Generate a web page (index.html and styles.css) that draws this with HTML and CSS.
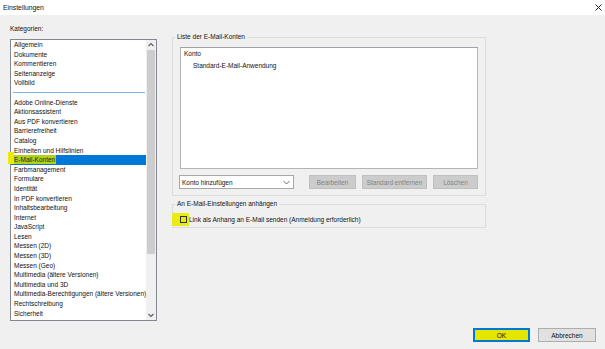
FILE: index.html
```html
<!DOCTYPE html>
<html>
<head>
    <title>Einstellungen</title>
    <link rel="stylesheet" href="styles.css">
</head>
<body>
<div class="window">
    <div class="titlebar">
        <span>Einstellungen</span>
        <svg class="close" width="7" height="7" viewBox="0 0 7 7"><path d="M0.5 0.5L6.5 6.5M6.5 0.5L0.5 6.5" stroke="#222" stroke-width="1"/></svg>
    </div>

    <div class="main">
        <div class="categories">
            <div class="caption">Kategorien:</div>
            <div class="listbox">
                <ul class="items">
                    <li>Allgemein</li>
                    <li>Dokumente</li>
                    <li>Kommentieren</li>
                    <li>Seitenanzeige</li>
                    <li>Vollbild</li>
                    <li class="sep"></li>
                    <li>Adobe Online-Dienste</li>
                    <li>Aktionsassistent</li>
                    <li>Aus PDF konvertieren</li>
                    <li>Barrierefreiheit</li>
                    <li>Catalog</li>
                    <li>Einheiten und Hilfslinien</li>
                    <li class="selected"><span class="hl">E-Mail-Konten</span></li>
                    <li>Farbmanagement</li>
                    <li>Formulare</li>
                    <li>Identität</li>
                    <li>In PDF konvertieren</li>
                    <li>Inhaltsbearbeitung</li>
                    <li>Internet</li>
                    <li>JavaScript</li>
                    <li>Lesen</li>
                    <li>Messen (2D)</li>
                    <li>Messen (3D)</li>
                    <li>Messen (Geo)</li>
                    <li>Multimedia (ältere Versionen)</li>
                    <li>Multimedia und 3D</li>
                    <li>Multimedia-Berechtigungen (ältere Versionen)</li>
                    <li>Rechtschreibung</li>
                    <li>Sicherheit</li>
                    <li>Sicherheit (erweitert)</li>
                </ul>
                <div class="scrollbar">
                    <svg class="arrow" width="10" height="10" viewBox="0 0 10 10"><path d="M2.5 6L5 3.5L7.5 6" fill="none" stroke="#606060" stroke-width="1.2"/></svg>
                    <div class="thumb"></div>
                    <div class="track"></div>
                    <svg class="arrow" width="10" height="10" viewBox="0 0 10 10"><path d="M2.5 4L5 6.5L7.5 4" fill="none" stroke="#606060" stroke-width="1.2"/></svg>
                </div>
            </div>
            <div class="marker"></div>
        </div>

        <div class="panel">
            <fieldset class="group accounts">
                <legend>Liste der E-Mail-Konten</legend>
                <div class="accountlist">
                    <div class="head">Konto</div>
                    <div class="entry">Standard-E-Mail-Anwendung</div>
                </div>
                <div class="actions">
                    <div class="combo">
                        <span>Konto hinzufügen</span>
                        <svg width="9" height="9" viewBox="0 0 9 9"><path d="M1.5 3L4.5 6L7.5 3" fill="none" stroke="#707070" stroke-width="1"/></svg>
                    </div>
                    <button class="btn first" disabled>Bearbeiten</button>
                    <button class="btn wide" disabled>Standard entfernen</button>
                    <button class="btn" disabled>Löschen</button>
                </div>
            </fieldset>

            <fieldset class="group attach">
                <legend>An E-Mail-Einstellungen anhängen</legend>
                <label class="check">
                    <span class="mark"><span class="box"></span></span>
                    <span>Link als Anhang an E-Mail senden (Anmeldung erforderlich)</span>
                </label>
            </fieldset>
        </div>
    </div>

    <div class="footer">
        <button class="dlg ok">OK</button>
        <button class="dlg">Abbrechen</button>
    </div>
</div>
</body>
</html>
```

FILE: styles.css
```css
body {
    margin: 0;
    padding: 0;
    background: #f0f0f0;
    font-family: "Liberation Sans", Arial, sans-serif;
    font-size: 6.5px;
    color: #111;
}

.window {
    width: 605px;
    height: 349px;
    overflow: hidden;
}

.titlebar {
    height: 15px;
    background: #fff;
    display: flex;
    align-items: center;
    justify-content: space-between;
    padding: 0 3px 0 3px;
    font-size: 6.8px;
}

.titlebar .close {
    margin-right: 0;
}

.main {
    display: flex;
    padding-top: 9px;
}

/* left column */
.categories {
    position: relative;
    margin-left: 10px;
    width: 147px;
}

.caption {
    height: 10px;
    line-height: 10px;
    margin-bottom: 5px;
}

.listbox {
    height: 282px;
    box-sizing: border-box;
    border: 1px solid #828790;
    background: #fff;
    display: flex;
    overflow: hidden;
}

.items {
    list-style: none;
    margin: 0;
    padding: 0;
    flex: 1;
    overflow: hidden;
}

.items li {
    height: 9.6px;
    line-height: 9.6px;
    padding-left: 3px;
    white-space: nowrap;
}

.items li.sep {
    position: relative;
}

.items li.sep::after {
    content: "";
    position: absolute;
    left: 2px;
    right: 1px;
    top: 4px;
    height: 1px;
    background: #7fb2e0;
}

.items li.selected {
    background: #0078d7;
}

.hl {
    background: #b2d21a;
    color: #1a1a1a;
    padding: 1px 1px 1px 0;
}

.marker {
    position: absolute;
    left: -2px;
    top: 128px;
    width: 6px;
    height: 12px;
    background: #e8ea10;
}

.scrollbar {
    width: 10px;
    background: #f0f0f0;
    display: flex;
    flex-direction: column;
}

.scrollbar .arrow {
    flex: none;
}

.thumb {
    height: 204px;
    margin: 0 1px;
    background: #cdcdcd;
}

.track {
    flex: 1;
}

/* right column */
.panel {
    margin-left: 15px;
    margin-top: 8px;
    width: 314px;
}

.group {
    margin: 0;
    border: 1px solid #dcdcdc;
    padding: 5px 7px 6px 7px;
}

.group legend {
    height: 10px;
    line-height: 10px;
    padding: 0 2px;
    margin-left: -5px;
}

.accountlist {
    height: 122px;
    box-sizing: border-box;
    background: #fff;
    border: 1px solid #b4b4b4;
    border-top-color: #a0a0a8;
    padding: 1px 3px;
}

.accountlist .head {
    height: 10px;
    line-height: 10px;
}

.accountlist .entry {
    height: 10px;
    line-height: 10px;
    margin-top: 2px;
    padding-left: 9px;
}

.actions {
    display: flex;
    margin-top: 6px;
    gap: 6px;
}

.combo {
    width: 115px;
    height: 14px;
    box-sizing: border-box;
    margin-left: -1px;
    background: #fff;
    border: 1px solid #a8a8a8;
    display: flex;
    align-items: center;
    justify-content: space-between;
    padding: 0 2px 0 2px;
}

.btn {
    font-family: inherit;
    font-size: 6.5px;
    height: 14px;
    width: 45px;
    padding: 0;
    background: #cccccc;
    border: 1px solid #bfbfbf;
    color: #838383;
}

.btn.first {
    margin-left: auto;
    width: 47px;
}

.btn.wide {
    width: 65px;
}

.attach {
    margin-top: 3px;
    padding: 4px 7px 1px 7px;
}

.check {
    display: flex;
    align-items: center;
    height: 13px;
}

.mark {
    width: 17px;
    height: 13px;
    margin-left: -8px;
    background: #eaea14;
    display: flex;
    align-items: center;
    padding-left: 8px;
    box-sizing: border-box;
}

.box {
    width: 7px;
    height: 7px;
    border: 1px solid #333;
    box-sizing: border-box;
}

/* dialog buttons */
.footer {
    display: flex;
    justify-content: flex-end;
    gap: 8px;
    margin-top: 7px;
    padding-right: 9px;
}

.dlg {
    font-family: inherit;
    font-size: 6.5px;
    width: 58px;
    height: 14px;
    padding: 0;
    background: #e1e1e1;
    border: 1px solid #adadad;
    color: #111;
}

.dlg.ok {
    width: 57px;
    background: #e4e600;
    border: 1px solid #0078d7;
    box-shadow: inset 0 0 0 1px #0078d7;
}
```
